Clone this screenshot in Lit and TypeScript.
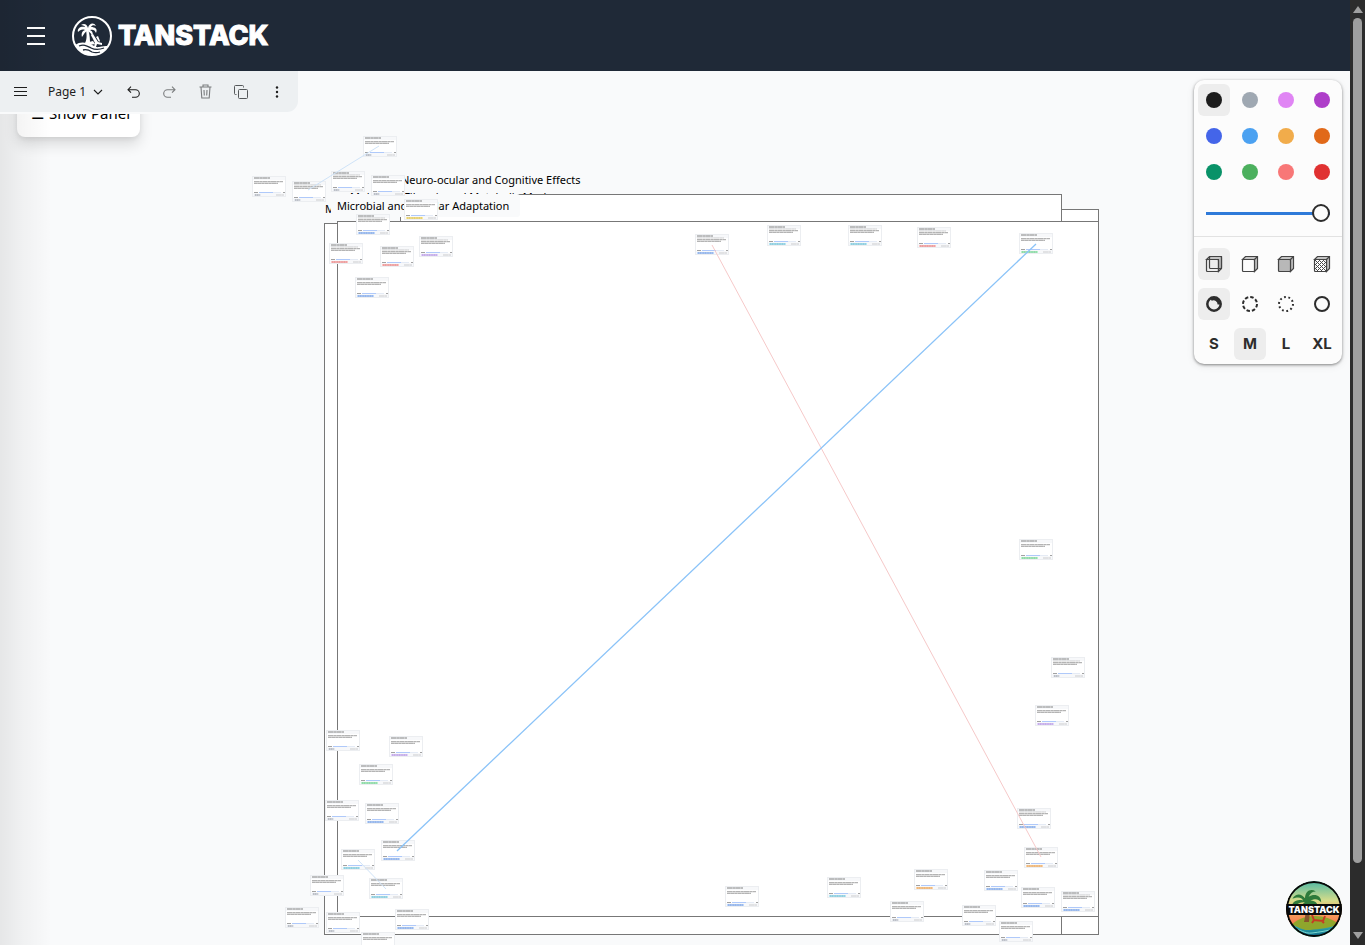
import { LitElement, html, svg, css } from "lit";
import { customElement, state } from "lit/decorators.js";

type Tone = "gray" | "blue" | "cyan" | "green" | "red" | "purple" | "yellow" | "orange";
type Card = [number, number, Tone, number];

const TONES: Record<Tone, [string, string]> = {
  gray: ["#e6e9ee", "#6b7280"],
  blue: ["#bfd7fb", "#4a78c8"],
  cyan: ["#b9e8f3", "#4b9fb8"],
  green: ["#b8f3cb", "#4aa86b"],
  red: ["#fbc4c4", "#cf5c5c"],
  purple: ["#e2d2fb", "#8f6bc4"],
  yellow: ["#fbeb9c", "#b79a2c"],
  orange: ["#fdd3a3", "#cf8434"],
};

const CARDS: Card[] = [
  [363, 136, "gray", 2], [252, 176, "gray", 2], [292, 181, "gray", 3], [331, 171, "gray", 3],
  [371, 175, "gray", 2], [404, 199, "yellow", 2], [356, 214, "blue", 3], [329, 243, "red", 3],
  [380, 246, "red", 3], [419, 236, "purple", 3], [355, 277, "blue", 2], [695, 234, "blue", 3],
  [767, 225, "cyan", 3], [848, 225, "cyan", 3], [917, 227, "red", 3], [1019, 233, "green", 2],
  [1019, 539, "green", 2], [1051, 657, "gray", 3], [1035, 705, "purple", 2], [326, 730, "gray", 2],
  [389, 736, "purple", 2], [359, 764, "green", 2], [325, 800, "gray", 2], [365, 803, "blue", 2],
  [341, 849, "cyan", 2], [381, 840, "blue", 2], [310, 875, "gray", 2], [369, 878, "cyan", 2],
  [285, 907, "gray", 2], [326, 912, "gray", 2], [395, 909, "blue", 2], [361, 932, "gray", 2],
  [725, 886, "blue", 2], [827, 877, "cyan", 2], [914, 869, "orange", 2], [890, 901, "gray", 2],
  [1017, 808, "blue", 3], [1024, 847, "orange", 2], [984, 870, "blue", 2], [1021, 887, "blue", 2],
  [1061, 891, "blue", 3], [962, 905, "gray", 2], [999, 921, "gray", 2],
];

const COLORS: [string, string][] = [
  ["black", "#1d1d1d"], ["grey", "#9fa8b2"], ["light violet", "#e085f4"], ["violet", "#ae3ec9"],
  ["blue", "#4465e9"], ["light blue", "#4ba1f1"], ["yellow", "#f1ac4b"], ["orange", "#e16919"],
  ["green", "#099268"], ["light green", "#4cb05e"], ["light red", "#f87777"], ["red", "#e03131"],
];

const cardNode = ([x, y, tone, lines]: Card) => {
  const [bg, fg] = TONES[tone];
  return svg`<g transform="translate(${x} ${y})">
    <rect class="card" x="0.5" y="0.5" width="33" height="20"></rect>
    <rect x="1" y="1" width="32" height="3" fill="#f7f8fa"></rect>
    <rect x="1" y="17" width="32" height="3" fill="#f7f8fa"></rect>
    <path class="ink title" d="M2 2h16"></path>
    ${lines === 3 ? svg`<path class="ink faint" d="M2 4h27"></path>` : ""}
    <path class="ink" d="M2 5.700h29"></path>
    <path class="ink second" d="M2 7.300h24"></path>
    <path class="ink" d="M2 16.500h4M31 16.500h2"></path>
    <path d="M7 16.500h22" stroke="#e5ebf5"></path>
    <path d="M7 16.500h14" stroke="#afc9fa"></path>
    <rect x="2" y="18" width=${tone === "gray" ? 7 : 17} height="2" fill=${bg}></rect>
    <path d="M3 19h${tone === "gray" ? 5 : 15}" stroke=${fg} stroke-width="0.7" stroke-dasharray="1.3 .4"></path>
    <path class="ink faint" d="M24 19h8"></path>
  </g>`;
};

const PALM = svg`
  <path d="M10 12C8 9 5 9 3 12c3-1 5-1 6 1-4-1-7 1-6 5 2-3 4-4 7-4-3 2-3 4-2 7 1-3 2-5 3-6 3 0 5 1 6 4 1-4-1-6-4-6 3-1 4-1 6 1 0-4-4-5-7-3 1-2 2-3 4-3-3-2-6 0-6 4z"></path>`;

@customElement("app-root")
export class AppRoot extends LitElement {
  @state() private color = 0;
  @state() private fill = 0;
  @state() private dash = 0;
  @state() private size = 1;

  static styles = css`
    :host {
      display: grid;
      grid-template-columns: 1fr 15px;
      height: 100vh;
      overflow: hidden;
      background: #f9fafb;
      color: #000;
      font-family: "Noto Sans", sans-serif;
    }
    button {
      border: 0;
      padding: 0;
      margin: 0;
      background: none;
      color: inherit;
      font: inherit;
      display: grid;
      place-items: center;
    }
    svg { display: block; }
    .page { display: flex; flex-direction: column; position: relative; min-width: 0; }
    header {
      display: flex;
      align-items: center;
      gap: 18px;
      height: 71px;
      box-sizing: border-box;
      padding: 0 18px;
      background: #1f2937;
      color: #fff;
    }
    .menu { width: 36px; height: 36px; }
    .brand { display: flex; align-items: center; gap: 6px; color: #fff; text-decoration: none; }
    .word { font: 800 27px/40px Inter, sans-serif; -webkit-text-stroke: 1px #fff; }
    main { flex: 1; position: relative; min-height: 0; overflow: hidden; }
    .canvas { position: absolute; inset: 0; width: 100%; height: 100%; }
    .frame { fill: #fff; stroke: #777; }
    .label { font-size: 11px; fill: #000; }
    .card { fill: #fff; stroke: #eceef1; }
    .ink { stroke: #555; stroke-width: 1; stroke-dasharray: 5 0.3 3 0.2; opacity: 0.55; }
    .title { stroke: #222; }
    .second { stroke-dasharray: 3 0.2 4 0.2; }
    .faint { stroke: #777; opacity: 0.35; }
    .edge { position: absolute; inset: 0 auto 0 0; width: 52px; pointer-events: none;
      background: linear-gradient(90deg, rgba(0,0,0,.08), rgba(0,0,0,.035) 45%, transparent); }
    .show {
      position: absolute;
      left: 17px;
      top: 18px;
      display: flex;
      gap: 5px;
      padding: 12px 10px 12px 14px;
      border-radius: 8px;
      background: #fff;
      box-shadow: 0 8px 14px rgba(0,0,0,.12), 0 2px 5px rgba(0,0,0,.07);
      font-size: 15px;
      line-height: 24px;
    }
    .bar-wrap { position: relative; z-index: 2; width: 298px; padding-bottom: 2px; background: #f9fafb; }
    .bar {
      display: flex;
      align-items: center;
      height: 41px;
      background: #edf0f2;
      border-bottom-right-radius: 11px;
      color: #1d1d1d;
    }
    .bar button { width: 36px; height: 40px; }
    .bar button:first-child { width: 40px; }
    .bar .pages { display: flex; align-items: center; justify-content: space-between; width: 75px; padding: 0 12px 0 8px; box-sizing: border-box; font-size: 12px; }
    .bar .off { color: #7a7c7e; }
    .panel {
      position: absolute;
      top: 9px;
      right: 8px;
      width: 148px;
      border-radius: 10px;
      background: #fcfcfc;
      box-shadow: 0 1px 3px rgba(0,0,0,.45), 0 2px 8px rgba(0,0,0,.08);
      color: #2d2d2d;
    }
    .grid { display: grid; grid-template-columns: repeat(4, 32px); gap: 4px; padding: 4px; }
    .grid button { height: 32px; border-radius: 6px; }
    .grid .on { background: #ededed; }
    .dot { width: 16px; height: 16px; border-radius: 50%; }
    .slide { display: block; padding: 12px 12px 14px; border-bottom: 1px solid #e2e2e2; }
    input {
      appearance: none;
      display: block;
      width: 100%;
      height: 18px;
      margin: 0;
      background: linear-gradient(#2f7ad9, #2f7ad9) center / 100% 3px no-repeat;
    }
    input::-webkit-slider-thumb {
      appearance: none;
      width: 18px;
      height: 18px;
      box-sizing: border-box;
      border: 2px solid #2d2d2d;
      border-radius: 50%;
      background: #fcfcfc;
    }
    .tools { padding: 11px 4px 4px; row-gap: 8px; }
    .size { font: 700 15px/20px Inter, sans-serif; }
    .badge { position: absolute; right: 8px; bottom: 8px; width: 56px; height: 56px; border-radius: 50%; overflow: hidden; }
    .badge text { font: 900 9px Inter, sans-serif; fill: #fff; }
    .scroll { display: flex; flex-direction: column; align-items: center; background: #2c2c2c; }
    .thumb { width: 9px; flex: 1; margin: 5px 0 69px; border-radius: 5px; background: #9f9f9f; }
    .tip { width: 0; height: 0; border: 5px solid transparent; }
    .up { border-top-width: 0; border-bottom: 7px solid #9f9f9f; margin-top: 6px; }
    .down { border-bottom-width: 0; border-top: 7px solid #9f9f9f; margin-bottom: 6px; }
  `;

  private canvas() {
    return html`<svg class="canvas" fill="none" role="img" aria-label="Canvas">
      <g transform="translate(0 -71)">
        <rect class="frame" x="400.5" y="209.5" width="698" height="690"></rect>
        <text class="label" x="350" y="201">Molecular Fibrosis and Metabolic Markers</text>
        <rect class="frame" x="400.5" y="194.5" width="661" height="690"></rect>
        <rect class="frame" x="324.5" y="223.5" width="774" height="711"></rect>
        <rect class="frame" x="324.5" y="223.5" width="737" height="711"></rect>
        <text class="label" x="325" y="213">M</text>
        <text class="label" x="401" y="184">Neuro-ocular and Cognitive Effects</text>
        <rect x="331" y="194" width="189" height="23" rx="3" fill="#f9fafb"></rect>
        <rect class="frame" x="337.5" y="221.5" width="761" height="695"></rect>
        <text class="label" x="337" y="210">Microbial and Cellular Adaptation</text>
        ${CARDS.map(cardNode)}
        <path d="M308 190 379 146M358 860 386 889" stroke="#cfe3f8"></path>
        <path d="M712 245 1041 857" stroke="#f6c9c9"></path>
        <path d="M397 851 1036 244" stroke="#8ac3f8" stroke-width="1.3"></path>
      </g>
    </svg>`;
  }

  private cube(i: number) {
    if (i === 0) {
      return html`<svg width="18" height="18" fill="none" stroke="#444" stroke-width="1.2">
        <path d="M1.500 4.500 4.500 1.500h12v12l-3 3v-12z" fill="#c4c4c4"></path>
        <rect x="4.500" y="1.500" width="12" height="12" rx="1"></rect>
        <rect x="1.500" y="4.500" width="12" height="12" rx="1"></rect>
      </svg>`;
    }
    const front = ["none", "#fcfcfc", "#b8b8b8", "url(#hatch)"][i];
    return html`<svg width="18" height="18" fill="none" stroke="#444" stroke-width="1.2">
      <defs><pattern id="hatch" width="4" height="4" patternUnits="userSpaceOnUse">
        <rect width="4" height="4" fill="#fff" stroke="none"></rect>
        <path d="M0 4 4 0M1 0l1 1M3 2l1 1" stroke="#333" stroke-width="0.9"></path>
      </pattern></defs>
      <path d="M1.500 4.500 4.500 1.500h12v12l-3 3v-12z" fill="#c4c4c4"></path>
      <rect x="1.500" y="4.500" width="12" height="12" rx="1" fill=${front}></rect>
      <path d="m13.500 4.500 3-3"></path>
    </svg>`;
  }

  private ring(i: number) {
    return html`<svg width="18" height="18" fill="none" stroke="#2d2d2d" stroke-width="2">
      ${i === 0
        ? svg`<circle cx="9" cy="9" r="6.700" stroke-width="2.500"></circle><path d="M6 4.500c4-2 8 1 8 5" stroke-width="2.800"></path>`
        : svg`<circle cx="9" cy="9" r="7" stroke-dasharray=${["", "3.5 2", "1.8 2.6", "none"][i]}></circle>`}
    </svg>`;
  }

  render() {
    return html`
      <div class="page">
        <header>
          <button class="menu" aria-label="Menu">
            <svg width="18" height="18" stroke="#fff" stroke-width="2"><path d="M0 1h18M0 9h18M0 17h18"></path></svg>
          </button>
          <a class="brand" href="#">
            <svg width="40" height="40" fill="none">
              <circle cx="20" cy="20" r="19" stroke="#fff" stroke-width="2"></circle>
              <g fill="#fff">
                <path d="M12 29c3-5 3-9 2-15l2-1c2 6 2 11 2 16z"></path>
                <path d="M16 12c-1-4-4-5-7-3 2 0 4 1 4 2-4-1-8 1-7 5 2-2 4-3 7-2-3 1-4 4-3 7 2-3 3-5 5-6 3 1 5 3 5 6 2-4 0-6-2-7 3-1 5 0 6 3 2-4-1-6-5-6 1-2 3-2 5-1-2-4-7-3-8 2z"></path>
                <path d="m19 19 2-1 5 8 4 1v2l-5-1-1 3h-2l1-4zM17 26l4-1 2 3-5 1zM26 20l2 5-1 1-3-5z"></path>
                <path d="M3 29c4-3 8-3 12-2 6 1 8 5 12 4 4-1 6-1 9-1-4 7-10 9-16 9S6 36 3 29z"></path>
              </g>
              <path d="M7 30c5-2 8 0 12 2s8 2 13 0M11 34c4-1 6 0 9 2 3 1 5 1 8 0" stroke="#1f2937" stroke-width="1.3"></path>
            </svg>
            <span class="word">TANSTACK</span>
          </a>
        </header>
        <main>
          ${this.canvas()}
          <button class="show"><span>☰</span><span>Show Panel</span></button>
          <div class="bar-wrap">
            <nav class="bar">
              <button aria-label="Main menu"><svg width="13" height="11" stroke="currentColor"><path d="M0 1.5h13M0 5.5h13M0 9.5h13"></path></svg></button>
              <button class="pages">Page 1
                <svg width="10" height="6" fill="none" stroke="currentColor" stroke-width="1.1"><path d="m1 1 4 4 4-4"></path></svg></button>
              <button aria-label="Undo"><svg width="13" height="12" fill="none" stroke="currentColor" stroke-width="1.1"><path d="M4 .7 1 3.700l3 3M1 3.700h7.500a3.800 3.800 0 0 1 0 7.600H5"></path></svg></button>
              <button class="off" aria-label="Redo"><svg width="13" height="12" fill="none" stroke="currentColor" stroke-width="1.1"><path d="m9 .7 3 3-3 3M12 3.700H4.500a3.800 3.800 0 0 0 0 7.600H8"></path></svg></button>
              <button class="off" aria-label="Delete"><svg width="13" height="15" fill="none" stroke="currentColor" stroke-width="1.1"><path d="M.5 3h12M4 3V1h5v2M2 3l.8 11h7.400L11 3M5 6l.3 5.500M8 6l-.3 5.500"></path></svg></button>
              <button class="off" aria-label="Duplicate"><svg width="14" height="14" fill="none" stroke="#55585a"><rect x="4.500" y="4.500" width="9" height="9" rx="1"></rect><path d="M2.500 9.500h-1a1 1 0 0 1-1-1v-7a1 1 0 0 1 1-1h7a1 1 0 0 1 1 1v1"></path></svg></button>
              <button aria-label="More"><svg width="4" height="12" fill="currentColor"><circle cx="2" cy="1.500" r="1.200"></circle><circle cx="2" cy="6" r="1.200"></circle><circle cx="2" cy="10.500" r="1.200"></circle></svg></button>
            </nav>
          </div>
          <section class="panel" aria-label="Styles">
            <div class="grid">
              ${COLORS.map(([name, value], i) => html`
                <button class=${i === this.color ? "on" : ""} aria-label=${name} @click=${() => (this.color = i)}>
                  <span class="dot" style="background:${value}"></span>
                </button>`)}
            </div>
            <label class="slide"><input type="range" aria-label="Opacity" min="0" max="100" .value=${"100"} /></label>
            <div class="grid tools">
              ${["None", "Semi", "Solid", "Pattern"].map((n, i) => html`
                <button class=${i === this.fill ? "on" : ""} aria-label=${n} @click=${() => (this.fill = i)}>${this.cube(i)}</button>`)}
              ${["Draw", "Dashed", "Dotted", "Line"].map((n, i) => html`
                <button class=${i === this.dash ? "on" : ""} aria-label=${n} @click=${() => (this.dash = i)}>${this.ring(i)}</button>`)}
              ${["S", "M", "L", "XL"].map((n, i) => html`
                <button class="size ${i === this.size ? "on" : ""}" @click=${() => (this.size = i)}>${n}</button>`)}
            </div>
          </section>
          <button class="badge" aria-label="TanStack devtools">
            <svg width="56" height="56">
              <defs>
                <linearGradient id="sky" x2="0" y2="1"><stop stop-color="#4fb9a5"></stop><stop offset=".35" stop-color="#d5dc8a"></stop><stop offset=".55" stop-color="#f9a65e"></stop><stop offset=".75" stop-color="#f47d50"></stop></linearGradient>
                <linearGradient id="sea" x2="0" y2="1"><stop stop-color="#39b7b4"></stop><stop offset="1" stop-color="#075f83"></stop></linearGradient>
              </defs>
              <circle cx="28" cy="28" r="28" fill="url(#sky)"></circle>
              <path d="M4 46c10-14 36-14 48-3v15H4z" fill="#8fa62c"></path>
              <path d="M0 44c10-2 14 6 24 5s18-2 32-6v14H0z" fill="url(#sea)"></path>
              <path d="M6 48c9 0 12 5 20 4s14-2 22-4" fill="none" stroke="#7ed8cf"></path>
              <path d="M18 41c2-8 2-14 0-24l4-1c2 8 2 17 1 25z" fill="#87552b"></path>
              <g transform="translate(1 -4) scale(1.8)" fill="#2e7b3b">${PALM}</g>
              <path d="m26 34 2 5 9 1 2-5M28 39l-2 3M36 40l2 2" fill="none" stroke="#c63b24" stroke-width="2"></path>
              <rect y="23" width="56" height="11" fill="#0b0b0b"></rect>
              <text x="28" y="32" text-anchor="middle">TANSTACK</text>
              <circle cx="28" cy="28" r="27" fill="none" stroke="#080808" stroke-width="2"></circle>
            </svg>
          </button>
        </main>
        <div class="edge"></div>
      </div>
      <div class="scroll" aria-hidden="true">
        <span class="tip up"></span><span class="thumb"></span><span class="tip down"></span>
      </div>`;
  }
}
